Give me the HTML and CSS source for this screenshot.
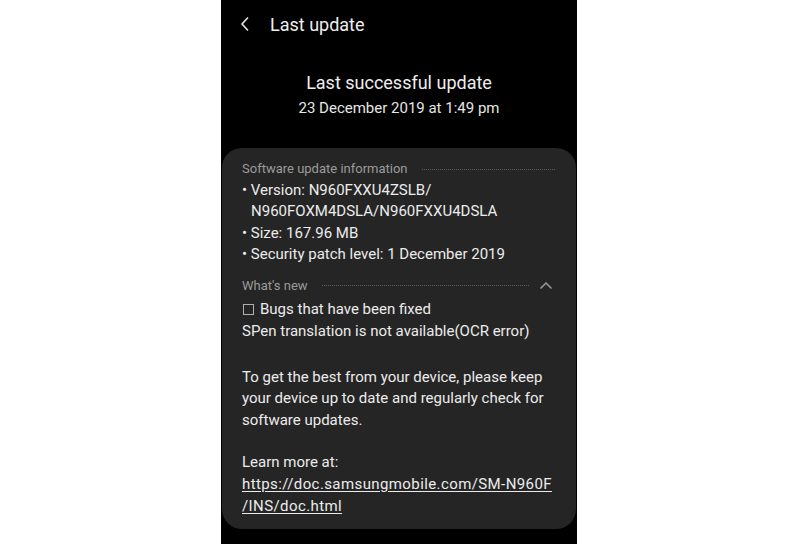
FILE: index.html
```html
<!DOCTYPE html>
<html>
<head>
<meta charset="utf-8">
<link rel="stylesheet" href="styles.css">
</head>
<body>
<div class="phone">
  <header class="topbar">
    <svg class="back" width="10" height="16" viewBox="0 0 10 16"><path d="M8 1.5 L2 8 L8 14.5" fill="none" stroke="#e6e6e6" stroke-width="1.6"/></svg>
    <span class="title">Last update</span>
  </header>
  <section class="hero">
    <div class="hero-title">Last successful update</div>
    <div class="hero-date">23 December 2019 at 1:49 pm</div>
  </section>
  <section class="card">
    <div class="sec-head"><span class="sec-label">Software update information</span><span class="dots"></span></div>
    <div class="line">• Version: N960FXXU4ZSLB/</div>
    <div class="line indent">N960FOXM4DSLA/N960FXXU4DSLA</div>
    <div class="line">• Size: 167.96 MB</div>
    <div class="line">• Security patch level: 1 December 2019</div>
    <div class="sec-head new"><span class="sec-label">What's new</span><span class="dots"></span>
      <svg class="chev" width="14" height="9" viewBox="0 0 14 9"><path d="M1.5 7.5 L7 2 L12.5 7.5" fill="none" stroke="#9a9a9a" stroke-width="1.5"/></svg>
    </div>
    <div class="notes">
      <div class="line"><span class="box"></span>Bugs that have been fixed</div>
      <div class="line">SPen translation is not available(OCR error)</div>
      <div class="line blank"></div>
      <div class="line">To get the best from your device, please keep</div>
      <div class="line">your device up to date and regularly check for</div>
      <div class="line">software updates.</div>
      <div class="line blank short"></div>
      <div class="line">Learn more at:</div>
      <div class="line link">https://doc.samsungmobile.com/SM-N960F</div>
      <div class="line link">/INS/doc.html</div>
    </div>
  </section>
</div>
</body>
</html>
```
FILE: styles.css
```css
html, body {
  margin: 0;
  padding: 0;
  background: #ffffff;
}
body {
  font-family: Roboto, "Liberation Sans", sans-serif;
}
.phone {
  margin-left: 221px;
  width: 356px;
  height: 544px;
  background: #000000;
  color: #ececec;
  display: flex;
  flex-direction: column;
  overflow: hidden;
}
.topbar {
  height: 48px;
  display: flex;
  align-items: center;
  padding-left: 19px;
}
.back {
  margin-right: 20px;
}
.title {
  font-size: 18px;
  color: #eeeeee;
}
.hero {
  padding-top: 23px;
  text-align: center;
  height: 77px;
}
.hero-title {
  font-size: 18px;
  line-height: 24px;
  color: #eeeeee;
}
.hero-date {
  font-size: 15px;
  line-height: 26px;
  color: #e6e6e6;
}
.card {
  margin: 0 1px;
  background: #252525;
  border-radius: 20px;
  padding: 10px 21px 11px 20px;
  height: 381px;
  box-sizing: border-box;
}
.sec-head {
  display: flex;
  align-items: center;
  height: 21.5px;
}
.sec-head.new {
  margin-top: 9px;
}
.sec-label {
  font-size: 13px;
  color: #9b9b9b;
  white-space: nowrap;
}
.dots {
  flex: 1;
  margin-left: 14px;
  border-top: 1px dotted #5c5c5c;
  margin-top: 1px;
}
.chev {
  margin-left: 10px;
  margin-right: 2px;
}
.line {
  font-size: 15px;
  line-height: 21.5px;
  height: 21.5px;
  white-space: nowrap;
  color: #ececec;
}
.notes {
  padding-top: 3px;
}
.notes .line {
  line-height: 21.8px;
  height: 21.8px;
}
.notes .line.blank {
  height: 24px;
}
.notes .line.blank.short {
  height: 20px;
}
.line.indent {
  padding-left: 9px;
}
.box {
  display: inline-block;
  width: 9px;
  height: 9px;
  border: 1.5px solid #b0b0b0;
  margin-left: 1px;
  margin-right: 6px;
  vertical-align: -1px;
}
.link {
  text-decoration: underline;
  text-underline-offset: 2px;
  letter-spacing: 0.4px;
}
```
